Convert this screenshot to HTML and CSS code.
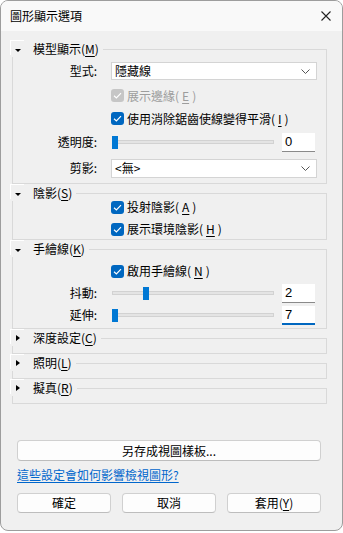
FILE: index.html
```html
<!DOCTYPE html>
<html lang="zh-Hant">
<head>
    <meta charset="UTF-8">
    <meta name="viewport" content="width=device-width, initial-scale=1.0">
    <title>圖形顯示選項</title>
    <link rel="stylesheet" href="styles.css">
</head>
<body>
    <div class="window">
        <div class="titlebar">
            <span class="title">圖形顯示選項</span>
            <svg class="close" width="10" height="10" viewBox="0 0 10 10">
                <path d="M0.5 0.5 L9.5 9.5 M9.5 0.5 L0.5 9.5" stroke="#222" stroke-width="1.1" fill="none"/>
            </svg>
        </div>

        <div class="content">
            <!-- 模型顯示 -->
            <fieldset class="group">
                <legend><span class="toggle open"></span><span class="legend-text">模型顯示(<u>M</u>)</span></legend>
                <div class="form form-model">
                    <span class="lbl">型式:</span>
                    <div class="select"><span>隱藏線</span><svg class="chev" width="9" height="5" viewBox="0 0 9 5"><path d="M0.5 0.5 L4.5 4.5 L8.5 0.5" stroke="#555" fill="none"/></svg></div>

                    <label class="check disabled"><span class="box"><svg width="13" height="13" viewBox="0 0 13 13"><path d="M3 6.8 L5.4 9 L10 4.2" stroke="#fff" stroke-width="1.2" fill="none"/></svg></span>展示邊緣(<u>E</u>)</label>

                    <label class="check"><span class="box"><svg width="13" height="13" viewBox="0 0 13 13"><path d="M3 6.8 L5.4 9 L10 4.2" stroke="#fff" stroke-width="1.2" fill="none"/></svg></span>使用消除鋸齒使線變得平滑(<u>I</u>)</label>

                    <span class="lbl">透明度:</span>
                    <div class="slider-row">
                        <div class="slider"><div class="track"></div><div class="thumb" style="left: 0px;"></div></div>
                        <div class="textbox">0</div>
                    </div>

                    <span class="lbl">剪影:</span>
                    <div class="select select-tall"><span>&lt;無&gt;</span><svg class="chev" width="9" height="5" viewBox="0 0 9 5"><path d="M0.5 0.5 L4.5 4.5 L8.5 0.5" stroke="#555" fill="none"/></svg></div>
                </div>
            </fieldset>

            <!-- 陰影 -->
            <fieldset class="group">
                <legend><span class="toggle open"></span><span class="legend-text">陰影(<u>S</u>)</span></legend>
                <div class="form form-shadow">
                    <label class="check"><span class="box"><svg width="13" height="13" viewBox="0 0 13 13"><path d="M3 6.8 L5.4 9 L10 4.2" stroke="#fff" stroke-width="1.2" fill="none"/></svg></span>投射陰影(<u>A</u>)</label>
                    <label class="check"><span class="box"><svg width="13" height="13" viewBox="0 0 13 13"><path d="M3 6.8 L5.4 9 L10 4.2" stroke="#fff" stroke-width="1.2" fill="none"/></svg></span>展示環境陰影(<u>H</u>)</label>
                </div>
            </fieldset>

            <!-- 手繪線 -->
            <fieldset class="group">
                <legend><span class="toggle open"></span><span class="legend-text">手繪線(<u>K</u>)</span></legend>
                <div class="form form-sketch">
                    <label class="check"><span class="box"><svg width="13" height="13" viewBox="0 0 13 13"><path d="M3 6.8 L5.4 9 L10 4.2" stroke="#fff" stroke-width="1.2" fill="none"/></svg></span>啟用手繪線(<u>N</u>)</label>

                    <span class="lbl">抖動:</span>
                    <div class="slider-row">
                        <div class="slider"><div class="track"></div><div class="thumb" style="left: 31px;"></div></div>
                        <div class="textbox">2</div>
                    </div>

                    <span class="lbl">延伸:</span>
                    <div class="slider-row">
                        <div class="slider"><div class="track"></div><div class="thumb" style="left: 0px;"></div></div>
                        <div class="textbox focused">7</div>
                    </div>
                </div>
            </fieldset>

            <fieldset class="group collapsed">
                <legend><span class="toggle"></span><span class="legend-text">深度設定(<u>C</u>)</span></legend>
            </fieldset>
            <fieldset class="group collapsed">
                <legend><span class="toggle"></span><span class="legend-text">照明(<u>L</u>)</span></legend>
            </fieldset>
            <fieldset class="group collapsed">
                <legend><span class="toggle"></span><span class="legend-text">擬真(<u>R</u>)</span></legend>
            </fieldset>
        </div>

        <div class="footer">
            <button class="btn btn-wide">另存成視圖樣板...</button>
            <a class="help-link" href="#">這些設定會如何影響檢視圖形?</a>
            <div class="actions">
                <button class="btn">確定</button>
                <button class="btn">取消</button>
                <button class="btn">套用(<u>Y</u>)</button>
            </div>
        </div>
    </div>
</body>
</html>
```

FILE: styles.css
```css
/* Global styles */
body {
    margin: 0;
    background: #fff;
    font-family: "Noto Sans CJK TC", "Noto Sans", sans-serif;
    font-size: 12px;
    line-height: 16px;
    color: #000;
}
u {
    text-decoration: underline;
    text-underline-offset: 2px;
}

.window {
    width: 343px;
    height: 531px;
    box-sizing: border-box;
    border: 1px solid #9d9d9d;
    border-radius: 8px;
    background: #f0f0f0;
    display: flex;
    flex-direction: column;
    overflow: hidden;
}

/* Title bar */
.titlebar {
    height: 30px;
    background: #f9f9f9;
    display: flex;
    align-items: center;
    justify-content: space-between;
    padding: 0 11px 0 9px;
    flex-shrink: 0;
}

/* Group boxes */
.content {
    padding: 10px 15px 0 11px;
}
.group {
    margin: 0 0 1px 0;
    padding: 0 9px 0 0;
    border: 1px solid #d9d9d9;
    min-inline-size: 0;
}
.group legend {
    display: flex;
    align-items: center;
    height: 16px;
    padding: 0 4px 0 0;
    margin-left: -3px;
}
.group.collapsed {
    padding-bottom: 7px;
}
.toggle {
    width: 13px;
    height: 14px;
    margin-top: -1px;
    align-self: flex-start;
    border-top: 1px solid #fff;
    border-left: 1px solid #fff;
    background: #f0f0f0;
    display: flex;
    justify-content: center;
    box-sizing: content-box;
}
.toggle::after {
    content: "";
    width: 0;
    height: 0;
    margin-top: 5px;
    border-left: 4px solid #000;
    border-top: 3px solid transparent;
    border-bottom: 3px solid transparent;
}
.toggle.open::after {
    margin-top: 8px;
    border-top: 3px solid #000;
    border-left: 3px solid transparent;
    border-right: 3px solid transparent;
    border-bottom: 0;
}
.legend-text {
    margin-left: 9px;
}

/* Form grid */
.form {
    display: grid;
    grid-template-columns: 84px 1fr;
    column-gap: 14px;
    align-items: center;
}
.form-model {
    padding: 3px 0 3px 0;
    grid-template-rows: 22px 27px 19px 28px 24px;
}
.form-shadow {
    margin-top: -4px;
    grid-template-rows: 20px 20px;
    row-gap: 2px;
}
.form-sketch {
    padding: 3px 0 2px 0;
    grid-template-rows: 22px 22px 22px;
}
.lbl {
    text-align: right;
    grid-column: 1;
}

.select {
    grid-column: 2;
    height: 18px;
    box-sizing: border-box;
    background: #fff;
    border: 1px solid #d4d4d4;
    display: flex;
    align-items: center;
    justify-content: space-between;
    padding: 0 6px 0 3px;
}
.select-tall {
    height: 19px;
}

.check {
    grid-column: 2;
    display: flex;
    align-items: center;
    gap: 3px;
}
.check .box {
    width: 13px;
    height: 13px;
    border-radius: 3px;
    background: #0067c0;
    display: flex;
}
.check.disabled {
    color: #9d9d9d;
}
.check.disabled .box {
    background: #c6c6c6;
}

/* Sliders */
.slider-row {
    grid-column: 2;
    display: flex;
    align-items: center;
    gap: 8px;
    padding-right: 2px;
}
.slider {
    flex: 1;
    height: 13px;
    margin-left: 1px;
    position: relative;
    display: flex;
    align-items: center;
}
.track {
    flex: 1;
    height: 2px;
    background: #e4e4e4;
    border: 1px solid #d2d2d2;
}
.thumb {
    position: absolute;
    top: 0;
    width: 6px;
    height: 13px;
    background: #0078d4;
}
.textbox {
    width: 33px;
    height: 19px;
    box-sizing: border-box;
    background: #fff;
    border-bottom: 1px solid #8a8a8a;
    padding: 1px 0 0 3px;
    font-family: "Liberation Sans", sans-serif;
    font-size: 13px;
}
.textbox.focused {
    border-bottom: 2px solid #0067c0;
}

/* Footer */
.footer {
    margin-top: auto;
    padding: 0 21px 17px 16px;
    display: flex;
    flex-direction: column;
}
.btn {
    font-family: inherit;
    font-size: 12px;
    line-height: 16px;
    height: 20px;
    padding: 0;
    background: #fdfdfd;
    border: 1px solid #d0d0d0;
    border-bottom-color: #bdbdbd;
    border-radius: 4px;
    color: #000;
}
.btn-wide {
    height: 21px;
}
.help-link {
    margin-top: 6px;
    color: #0066cc;
    text-decoration: underline;
    text-underline-offset: 2px;
    align-self: flex-start;
}
.actions {
    margin-top: 10px;
    display: grid;
    grid-template-columns: 94px 94px 94px;
    justify-content: space-between;
}
```
